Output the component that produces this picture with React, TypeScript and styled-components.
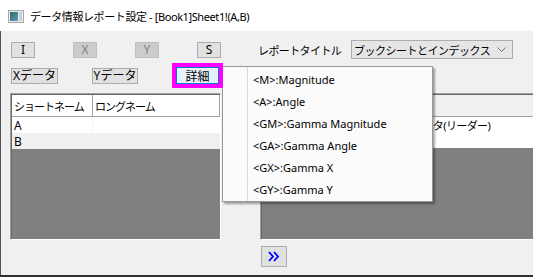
import React from 'react';
import styled, { createGlobalStyle } from 'styled-components';

const GlobalStyle = createGlobalStyle`
  html, body {
    margin: 0;
    padding: 0;
    background: #ffffff;
  }
  body {
    font-family: 'Noto Sans', 'Noto Sans CJK JP', sans-serif;
    color: #000;
  }
  * {
    box-sizing: border-box;
  }
`;

const menuItems = [
  '<M>:Magnitude',
  '<A>:Angle',
  '<GM>:Gamma Magnitude',
  '<GA>:Gamma Angle',
  '<GX>:Gamma X',
  '<GY>:Gamma Y',
];

const AppIcon = () => (
  <svg width="16" height="13" viewBox="0 0 16 13">
    <defs>
      <linearGradient id="ig" x1="0" y1="0" x2="1" y2="1">
        <stop offset="0" stopColor="#2f6f5c" />
        <stop offset="1" stopColor="#5f95c2" />
      </linearGradient>
    </defs>
    <rect x="0.5" y="0.5" width="15" height="12" fill="#ececec" stroke="#a9a9a9" />
    <rect x="2" y="2" width="8" height="9" fill="url(#ig)" />
    <rect x="11" y="2" width="3" height="9" fill="#c6d3d9" />
  </svg>
);

const App = () => {
  return (
    <>
      <GlobalStyle />
      <Window>
        <TitleBar>
          <AppIcon />
          <TitleText>データ情報レポート設定 - [Book1]Sheet1!(A,B)</TitleText>
        </TitleBar>
        <Body>
          <ToolRow $height={19} $gap={38}>
            <Btn $w={24}>I</Btn>
            <Btn $w={24} $disabled>X</Btn>
            <Btn $w={24} $disabled>Y</Btn>
            <Btn $w={24}>S</Btn>
            <Label>レポートタイトル</Label>
            <Select>
              <span>ブックシートとインデックス</span>
              <svg width="9" height="6" viewBox="0 0 9 6">
                <polyline points="0.5,0.5 4.5,4.5 8.5,0.5" fill="none" stroke="#707070" strokeWidth="1" />
              </svg>
            </Select>
          </ToolRow>
          <ToolRow $height={25} $gap={34} $top={4}>
            <Btn $w={47}>Xデータ</Btn>
            <Btn $w={46}>Yデータ</Btn>
            <Highlight>
              <DetailBtn>詳細</DetailBtn>
            </Highlight>
          </ToolRow>
          <Panels>
            <ListFrame $w={211}>
              <ListInner>
                <HeaderRow $bg="#ffffff">
                  <HeaderCell $w={81}>ショートネーム</HeaderCell>
                  <HeaderCell>ロングネーム</HeaderCell>
                </HeaderRow>
                <Row $bg="#ffffff">
                  <Cell $w={81} $line>A</Cell>
                  <Cell />
                </Row>
                <Row $bg="#f0f0f0">
                  <Cell $w={81}>B</Cell>
                  <Cell />
                </Row>
                <Fill />
              </ListInner>
            </ListFrame>
            <ListFrame $w={290}>
              <ListInner>
                <HeaderRow $bg="#f0f0f0">
                  <HeaderCell $w={148} />
                  <HeaderCell />
                </HeaderRow>
                <Row $bg="#ffffff" $h={15}>
                  <Cell $w={148} $line />
                  <Cell $size={11} $spacing={-0.6}>データ(リーダー)</Cell>
                </Row>
                <Row $bg="#ffffff" $h={16}>
                  <Cell $w={148} />
                  <Cell />
                </Row>
                <Fill />
              </ListInner>
            </ListFrame>
          </Panels>
          <ExpandBtn>
            <svg width="12" height="11" viewBox="0 0 12 11">
              <polyline points="1,1 5,5.5 1,10" fill="none" stroke="#0000ff" strokeWidth="1.8" />
              <polyline points="6,1 10,5.5 6,10" fill="none" stroke="#0000ff" strokeWidth="1.8" />
            </svg>
          </ExpandBtn>
          <PopupMenu>
            {menuItems.map((item) => (
              <MenuItem key={item}>{item}</MenuItem>
            ))}
          </PopupMenu>
        </Body>
        <BottomEdge />
      </Window>
    </>
  );
};

export default App;

const Window = styled.div`
  width: 533px;
  height: 277px;
  display: flex;
  flex-direction: column;
  overflow: hidden;
`;

const TitleBar = styled.div`
  height: 31px;
  flex: none;
  background: #ffffff;
  display: flex;
  align-items: center;
  padding: 1px 0 0 8px;
`;

const TitleText = styled.span`
  margin-left: 6px;
  font-size: 11px;
  letter-spacing: -0.4px;
  color: #000;
  white-space: nowrap;
`;

const Body = styled.div`
  position: relative;
  flex: 1;
  background: #f0f0f0;
  border-left: 1px solid #4f5357;
  padding: 9px 0 0 9px;
  overflow: hidden;
  display: flex;
  flex-direction: column;
`;

const ToolRow = styled.div<{ $height: number; $gap: number; $top?: number }>`
  display: flex;
  align-items: center;
  height: ${({ $height }) => $height}px;
  gap: ${({ $gap }) => $gap}px;
  margin-top: ${({ $top }) => $top || 0}px;
  padding-left: 1px;
  flex: none;
`;

const Btn = styled.div<{ $w: number; $disabled?: boolean }>`
  width: ${({ $w }) => $w}px;
  height: 16px;
  flex: none;
  display: flex;
  align-items: center;
  justify-content: center;
  font-size: 12px;
  line-height: 1;
  background: ${({ $disabled }) => ($disabled ? '#cccccc' : '#e1e1e1')};
  border: 1px solid ${({ $disabled }) => ($disabled ? '#bfbfbf' : '#adadad')};
  color: ${({ $disabled }) => ($disabled ? '#838383' : '#000000')};
  white-space: nowrap;
`;

const Label = styled.span`
  width: 93px;
  margin-left: -1px;
  font-size: 11px;
  letter-spacing: -0.6px;
  white-space: nowrap;
  flex: none;
`;

const Select = styled.div`
  width: 162px;
  height: 19px;
  margin-left: -38px;
  flex: none;
  display: flex;
  align-items: center;
  justify-content: space-between;
  padding: 0 6px 0 2px;
  background: #e5e5e5;
  border: 1px solid #adadad;
  font-size: 11px;
  letter-spacing: -0.5px;
  white-space: nowrap;
`;

const Highlight = styled.div`
  position: relative;
  z-index: 2;
  border: 4px solid #ff00ff;
  display: flex;
  flex: none;
`;

const DetailBtn = styled.div`
  width: 43px;
  height: 17px;
  display: flex;
  align-items: center;
  justify-content: center;
  background: #e5f1fb;
  border: 1px solid #0078d7;
  font-size: 12px;
`;

const Panels = styled.div`
  display: flex;
  gap: 39px;
  margin-top: 5px;
  height: 147px;
  flex: none;
`;

const ListFrame = styled.div<{ $w: number }>`
  width: ${({ $w }) => $w}px;
  flex: none;
  height: 100%;
  border-top: 1px solid #a0a0a0;
  border-left: 1px solid #a0a0a0;
  border-right: 1px solid #ffffff;
  border-bottom: 1px solid #ffffff;
  display: flex;
`;

const ListInner = styled.div`
  flex: 1;
  display: flex;
  flex-direction: column;
  border-top: 1px solid #696969;
  border-left: 1px solid #696969;
  overflow: hidden;
`;

const HeaderRow = styled.div<{ $bg: string }>`
  height: 22px;
  flex: none;
  display: flex;
  background: ${({ $bg }) => $bg};
  border-bottom: 1px solid #a0a0a0;
`;

const HeaderCell = styled.div<{ $w?: number }>`
  ${({ $w }) => ($w ? `width: ${$w}px; flex: none;` : 'flex: 1;')}
  display: flex;
  align-items: center;
  padding-left: 2px;
  border-right: 1px solid #a0a0a0;
  font-size: 11px;
  letter-spacing: -1px;
  white-space: nowrap;
`;

const Row = styled.div<{ $bg: string; $h?: number }>`
  height: ${({ $h }) => $h || 16}px;
  flex: none;
  display: flex;
  background: ${({ $bg }) => $bg};
`;

const Cell = styled.div<{ $w?: number; $line?: boolean; $size?: number; $spacing?: number }>`
  ${({ $w }) => ($w ? `width: ${$w}px; flex: none;` : 'flex: 1;')}
  display: flex;
  align-items: center;
  padding-left: 2px;
  font-size: ${({ $size }) => $size || 12}px;
  letter-spacing: ${({ $spacing }) => $spacing || 0}px;
  white-space: nowrap;
  border-right: 1px solid ${({ $line }) => ($line ? '#f3f3f3' : 'transparent')};
`;

const Fill = styled.div`
  flex: 1;
  background: #808080;
`;

const ExpandBtn = styled.div`
  width: 26px;
  height: 21px;
  margin: 6px 0 0 251px;
  flex: none;
  display: flex;
  align-items: center;
  justify-content: center;
  background: #e1e1e1;
  border: 1px solid #adadad;
`;

const PopupMenu = styled.div`
  position: absolute;
  left: 221px;
  top: 35px;
  width: 211px;
  height: 136px;
  padding: 1px 0;
  border: 1px solid #979797;
  box-shadow: 2px 2px 2px rgba(0, 0, 0, 0.35);
  background: linear-gradient(
    to right,
    #fbfbfb 24px,
    #d9d9d9 24px,
    #d9d9d9 25px,
    #ffffff 25px,
    #ffffff 26px,
    #fbfbfb 26px
  );
  z-index: 1;
`;

const MenuItem = styled.div`
  height: 22px;
  display: flex;
  align-items: center;
  padding-left: 30px;
  font-family: 'Noto Sans', sans-serif;
  font-size: 11px;
  color: #000;
  white-space: nowrap;
`;

const BottomEdge = styled.div`
  height: 2px;
  flex: none;
  background: #2f3235;
`;
